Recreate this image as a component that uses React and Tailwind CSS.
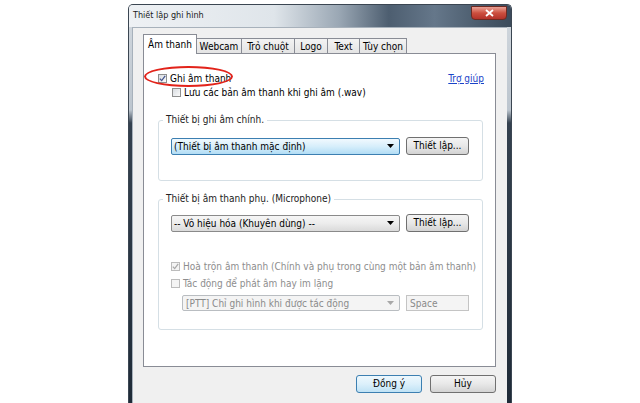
import React from "react";

const font = "font-['DejaVu_Sans_Condensed','Liberation_Sans',sans-serif]";

const tabs = [
  { label: "Âm thanh", w: "w-[54px]", active: true },
  { label: "Webcam", w: "w-[45px]" },
  { label: "Trỏ chuột", w: "w-[53px]" },
  { label: "Logo", w: "w-[33px]" },
  { label: "Text", w: "w-[32px]" },
  { label: "Tùy chọn", w: "w-[47px]" },
];

const Check = ({ checked, disabled }) => (
  <span
    className={
      disabled
        ? "w-[9px] h-[9px] shrink-0 border border-[#bcbcbc] bg-[#f4f4f4] flex items-center justify-center"
        : "w-[9px] h-[9px] shrink-0 border border-[#8e8f8f] bg-gradient-to-br from-[#d8dce1] to-[#fbfbfb] flex items-center justify-center"
    }
  >
    {checked && (
      <svg width="7" height="7" viewBox="0 0 7 7">
        <path
          d="M0.8 3.6 L2.7 5.6 L6.2 0.9"
          stroke={disabled ? "#a9a9a9" : "#44558e"}
          strokeWidth="1.3"
          fill="none"
        />
      </svg>
    )}
  </span>
);

const Arrow = ({ color = "#000" }) => (
  <svg width="7" height="4" viewBox="0 0 7 4">
    <path d="M0 0 H7 L3.5 4 Z" fill={color} />
  </svg>
);

const SetupButton = () => (
  <button className="w-[63px] h-[18px] border border-[#707070] rounded-[3px] bg-gradient-to-b from-[#f4f4f4] via-[#e8e8e8] to-[#d3d3d3] text-[10px] text-black leading-none">
    Thiết lập...
  </button>
);

export default function App() {
  return (
    <div className={`w-[640px] h-[403px] bg-white overflow-hidden flex justify-center pt-[4px] ${font}`}>
      {/* window frame */}
      <div className="w-[384px] h-[399px] flex flex-col rounded-t-[5px] border border-b-0 border-[#3b4652] bg-[linear-gradient(to_bottom,#d3d9df_0px,#bcc5ce_105px,#34414f_118px,#1f2b38_100%)]">
        {/* title bar */}
        <div className="h-[22px] shrink-0 flex items-start justify-between rounded-t-[4px] bg-[linear-gradient(to_right,#eef1f4_0%,#dfe5ea_38%,#9aa7b4_55%,#4d5e70_68%,#65778a_80%,#4a5b6c_92%,#3c4b5b_100%)]">
          <span className="pl-[4px] pt-[6px] text-[9px] text-[#1c1c1c] leading-none">
            Thiết lập ghi hình
          </span>
          <div className="mr-[4px] mt-[1px] w-[36px] h-[14px] rounded-b-[4px] border border-[#6e2a22] bg-gradient-to-b from-[#e9a196] via-[#cc4f3f] to-[#b3322a] flex items-center justify-center">
            <svg width="9" height="8" viewBox="0 0 9 8">
              <path d="M1 1 L8 7 M8 1 L1 7" stroke="#fff" strokeWidth="1.8" />
            </svg>
          </div>
        </div>

        {/* client area */}
        <div className="flex-1 flex pl-[3px] pr-[4px]">
          <div className="flex-1 bg-[#f0f0f0] border-l border-t border-[#a7b1bb] pt-[6px] pl-[10px] pr-[10px]">
            {/* tab strip */}
            <div className="flex items-end h-[19px]">
              {tabs.map((t) =>
                t.active ? (
                  <div
                    key={t.label}
                    className={`${t.w} h-[20px] -mb-px relative z-10 bg-white border border-b-0 border-[#898c95] text-[10px] text-black flex items-center justify-center`}
                  >
                    {t.label}
                  </div>
                ) : (
                  <div
                    key={t.label}
                    className={`${t.w} h-[15px] bg-gradient-to-b from-[#f3f3f3] to-[#e4e4e4] border-t border-r border-[#898c95] text-[10px] text-black flex items-center justify-center`}
                  >
                    {t.label}
                  </div>
                )
              )}
            </div>

            {/* tab panel */}
            <div className="w-[353px] h-[314px] border border-[#898c95] bg-white flex flex-col text-[10px] text-black">
              {/* row 1 */}
              <div className="mt-[18px] h-[12px] pl-[14px] pr-[11px] flex items-center justify-between">
                <div className="relative flex items-center gap-[3px]">
                  <Check checked />
                  <span>Ghi âm thanh</span>
                  <span className="absolute left-[-14px] top-[-5px] w-[89px] h-[21px] rounded-[50%] border-2 border-[#e2231a]" />
                </div>
                <span className="text-[#1a43c8] underline">Trợ giúp</span>
              </div>
              {/* row 2 */}
              <div className="mt-[2px] h-[12px] pl-[28px] flex items-center gap-[3px]">
                <Check />
                <span>Lưu các bản âm thanh khi ghi âm (.wav)</span>
              </div>

              {/* group 1 */}
              <fieldset className="mt-[16px] ml-[14px] w-[325px] border border-[#d5dfe5] rounded-[3px] pl-[12px] pb-[25px]">
                <legend className="-ml-[8px] px-[3px] leading-[12px] text-[#222]">
                  Thiết bị ghi âm chính.
                </legend>
                <div className="mt-[11px] flex items-center gap-[6px]">
                  <div className="w-[229px] h-[17px] border border-[#3c7fb1] rounded-[2px] bg-gradient-to-b from-[#f1f9fe] via-[#d6eefb] to-[#b2ddf5] flex items-center justify-between pl-[2px] pr-[5px]">
                    <span>(Thiết bị âm thanh mặc định)</span>
                    <Arrow />
                  </div>
                  <SetupButton />
                </div>
              </fieldset>

              {/* group 2 */}
              <fieldset className="mt-[12px] ml-[14px] w-[325px] border border-[#d5dfe5] rounded-[3px] pl-[12px] pb-[18px]">
                <legend className="-ml-[8px] px-[3px] leading-[12px] text-[#222]">
                  Thiết bị âm thanh phụ. (Microphone)
                </legend>
                <div className="mt-[9px] flex items-center gap-[6px]">
                  <div className="w-[229px] h-[17px] border border-[#8a8a8a] rounded-[2px] bg-gradient-to-b from-[#f6f6f6] via-[#ececec] to-[#dadada] flex items-center justify-between pl-[2px] pr-[5px]">
                    <span>-- Vô hiệu hóa (Khuyên dùng) --</span>
                    <Arrow />
                  </div>
                  <SetupButton />
                </div>

                <div className="mt-[28px] h-[12px] flex items-center gap-[3px] text-[#8d8d8d]">
                  <Check checked disabled />
                  <span>Hoà trộn âm thanh (Chính và phụ trong cùng một bản âm thanh)</span>
                </div>
                <div className="mt-[5px] h-[12px] flex items-center gap-[3px] text-[#8d8d8d]">
                  <Check disabled />
                  <span>Tác động để phát âm hay im lặng</span>
                </div>

                <div className="mt-[6px] ml-[11px] flex items-center gap-[6px] text-[#8a8a8a]">
                  <div className="w-[218px] h-[16px] border border-[#b9bdc1] rounded-[2px] bg-[#f4f4f4] flex items-center justify-between pl-[3px] pr-[5px]">
                    <span>[PTT] Chỉ ghi hình khi được tác động</span>
                    <Arrow color="#a8a8a8" />
                  </div>
                  <div className="w-[63px] h-[16px] border border-[#c4c4c4] bg-[#f4f4f4] flex items-center pl-[3px]">
                    Space
                  </div>
                </div>
              </fieldset>
            </div>

            {/* dialog buttons */}
            <div className="mt-[8px] w-[353px] flex justify-end gap-[8px]">
              <button className="w-[66px] h-[18px] border border-[#3c7fb1] rounded-[3px] bg-gradient-to-b from-[#eef8fd] via-[#dcf0fb] to-[#bfe2f5] text-[10px] text-black leading-none">
                Đồng ý
              </button>
              <button className="w-[66px] h-[18px] border border-[#707070] rounded-[3px] bg-gradient-to-b from-[#f4f4f4] via-[#e8e8e8] to-[#d3d3d3] text-[10px] text-black leading-none">
                Hủy
              </button>
            </div>
          </div>
        </div>
      </div>
    </div>
  );
}
